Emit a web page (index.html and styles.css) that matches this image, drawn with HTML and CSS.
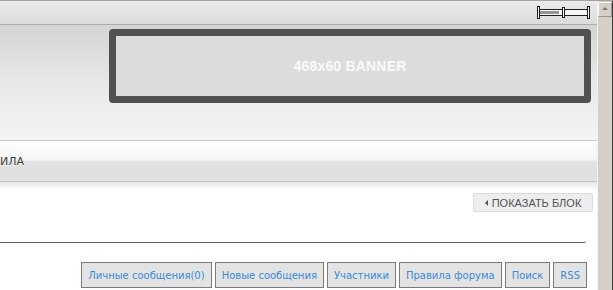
FILE: index.html
```html
<!DOCTYPE html>
<html lang="ru">
<head>
  <meta charset="UTF-8" />
  <title>Форум</title>
  <link rel="stylesheet" href="styles.css">
</head>
<body>
  <div id="window">
    <div class="page">
      <!-- Top bar with width slider -->
      <div class="topbar">
        <div class="resizer">
          <svg width="54" height="14" viewBox="0 0 54 14">
            <rect x="2.5" y="3.5" width="48" height="6" fill="#f7f7f7" stroke="#1e1e1e" />
            <rect x="3" y="5" width="19" height="3" fill="#8f9799" />
            <rect x="0.5" y="0.5" width="2" height="12" fill="#fff" stroke="#1e1e1e" />
            <rect x="50.5" y="0.5" width="2" height="12" fill="#fff" stroke="#1e1e1e" />
            <rect x="25.5" y="1.5" width="2" height="10" fill="#fff" stroke="#1e1e1e" />
          </svg>
        </div>
      </div>

      <!-- Header -->
      <div class="header">
        <div class="banner">468x60 BANNER</div>
      </div>

      <!-- Navigation -->
      <div class="nav">
        <a class="nav-item">Правила</a>
      </div>
      <div class="nav-shadow"></div>

      <!-- Content -->
      <div class="content">
        <div class="toggle-row">
          <div class="block-toggle"><span class="arrow"></span>Показать блок</div>
        </div>
        <div class="divider"></div>
        <div class="links">
          <a>Личные сообщения(0)</a>
          <a>Новые сообщения</a>
          <a>Участники</a>
          <a>Правила форума</a>
          <a>Поиск</a>
          <a>RSS</a>
        </div>
      </div>
    </div>

    <!-- Scrollbar -->
    <div class="scrollbar">
      <div class="scroll-up"><span class="tri"></span></div>
    </div>
  </div>
</body>
</html>
```

FILE: styles.css
```css
/* Reset & Base */
* { margin: 0; padding: 0; box-sizing: border-box; }
html, body { width: 100%; height: 100%; overflow: hidden; background: #fff; font-family: "DejaVu Sans", Verdana, sans-serif; }
#window { display: flex; height: 100%; border-top: 1px solid #a2a2a2; }
.page { flex: 1; display: flex; flex-direction: column; min-width: 0; }

/* Top bar */
.topbar {
  height: 24px; display: flex; justify-content: flex-end; align-items: flex-start;
  padding: 5px 6px 0 0;
  background: linear-gradient(#ececec, #dbdbdb);
  border-bottom: 1px solid #adadad;
}
.resizer { display: flex; }

/* Header */
.header {
  height: 115px; display: flex; justify-content: flex-end; align-items: flex-start;
  padding: 4px 6px 0 0;
  background: linear-gradient(#d6d4d2, #e9e8e8 50%, #f4f4f4);
}
.banner {
  width: 482px; height: 74px; display: flex; justify-content: center; align-items: center;
  background: #dcdcdc; border: 7px solid #515151; border-radius: 4px;
  color: #fafafa; font-family: "Liberation Sans", Arial, sans-serif; font-size: 14px; font-weight: bold; letter-spacing: 0.2px;
}

/* Navigation */
.nav {
  height: 42px; display: flex; align-items: center; overflow: hidden;
  border-top: 1px solid #c8c8c8; border-bottom: 1px solid #c2c2c2;
  background: linear-gradient(#fefefe, #f6f6f6 48%, #e3e3e3 50%, #e0e0e0 80%, #e4e4e4);
}
.nav-item {
  margin-left: -30px; font-size: 11px; text-transform: uppercase; color: #3a3a3a;
  text-shadow: 0 1px 0 #fff; white-space: nowrap;
}
.nav-shadow { height: 8px; background: linear-gradient(#e6e6e6, #fff); }

/* Content */
.content { flex: 1; display: flex; flex-direction: column; }
.toggle-row { display: flex; justify-content: flex-end; padding: 3px 4px 0 0; }
.block-toggle {
  height: 19px; width: 120px; display: flex; align-items: center; justify-content: center; gap: 4px;
  background: #ededed; border: 1px solid #dcdcdc; border-radius: 2px;
  font-family: "Liberation Sans", Arial, sans-serif; font-size: 11px; text-transform: uppercase; color: #555;
}
.arrow { width: 0; height: 0; border-top: 3px solid transparent; border-bottom: 3px solid transparent; border-right: 3px solid #555; }
.divider {
  height: 31px; margin-right: 11px;
  border-bottom: 1px solid #5c5c5c; border-bottom-right-radius: 2px;
}

/* Bottom links */
.links { display: flex; justify-content: flex-end; gap: 3px; padding: 19px 10px 0 0; }
.links a {
  height: 26px; display: flex; align-items: center; padding: 0 6px;
  background: #e3e3e3; border: 1px solid #7a7a7a;
  font-size: 10px; color: #3a8ad8; white-space: nowrap; cursor: pointer;
}

/* Fake scrollbar */
.scrollbar {
  width: 16px; padding-top: 1px;
  background: #d4d0c8; border-left: 1px solid #f2f2f2; border-right: 1px solid #3f3f3f;
}
.scroll-up {
  height: 15px; display: flex; justify-content: center; align-items: center;
  border-top: 1px solid #fff; border-left: 1px solid #fff;
  border-right: 1px solid #9a968e; border-bottom: 1px solid #9a968e;
}
.tri { width: 0; height: 0; border-left: 3px solid transparent; border-right: 3px solid transparent; border-bottom: 3px solid #7d7d7d; margin-bottom: 2px; }
```
